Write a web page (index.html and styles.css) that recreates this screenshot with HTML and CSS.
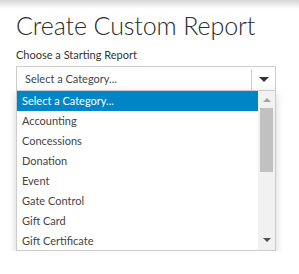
FILE: index.html
```html
<!DOCTYPE html>
<html lang="en">
<head>
  <meta charset="UTF-8" />
  <title>Create Custom Report</title>
  <link rel="stylesheet" href="styles.css">
</head>
<body>
  <div class="top-shade"></div>
  <div class="page">
    <h1>Create Custom Report</h1>
    <label class="field-label">Choose a Starting Report</label>

    <!-- fake select, shown open -->
    <div class="picker">
      <div class="picker-box">
        <span class="picker-value">Select a Category...</span>
        <span class="picker-btn"><span class="tri-down"></span></span>
      </div>
      <div class="picker-menu">
        <ul class="options">
          <li class="selected">Select a Category...</li>
          <li>Accounting</li>
          <li>Concessions</li>
          <li>Donation</li>
          <li>Event</li>
          <li>Gate Control</li>
          <li>Gift Card</li>
          <li>Gift Certificate</li>
        </ul>
        <div class="scrollbar">
          <span class="sb-arrow up"></span>
          <div class="sb-track"><div class="sb-thumb"></div></div>
          <span class="sb-arrow down"></span>
        </div>
      </div>
    </div>
  </div>
</body>
</html>
```

FILE: styles.css
```css
body {
  margin: 0;
  font-family: Lato, sans-serif;
  color: #333;
  background: #fff;
}
.top-shade {
  height: 9px;
  background: linear-gradient(#d6d6d6, #fff);
}
.page {
  padding: 0 23px 0 16px;
}
h1 {
  margin: 1px 0 0;
  font-size: 25px;
  font-weight: 300;
  letter-spacing: -0.1px;
  line-height: 30px;
  white-space: nowrap;
  color: #2a2a2a;
}
.field-label {
  display: block;
  margin-top: 8px;
  font-size: 11px;
  line-height: 14px;
  color: #333;
}
.picker {
  margin-top: 4px;
  width: 260px;
}
.picker-box {
  display: flex;
  height: 23px;
  border: 1px solid #ccc;
  border-bottom: none;
  font-size: 11px;
}
.picker-value {
  flex: 1;
  padding-left: 8px;
  line-height: 24px;
  color: #444;
}
.picker-btn {
  width: 23px;
  margin: 2px 0 0;
  border-left: 1px solid #ccc;
  display: flex;
  align-items: center;
  justify-content: center;
}
.tri-down {
  border-left: 5px solid transparent;
  border-right: 5px solid transparent;
  border-top: 5px solid #333;
}
.picker-menu {
  display: flex;
  height: 159px;
  border: 1px solid #ccc;
  box-shadow: 0 3px 8px rgba(0, 0, 0, 0.18);
  overflow: hidden;
}
.options {
  flex: 1;
  margin: 0;
  padding: 0;
  list-style: none;
  font-size: 11px;
  color: #444;
}
.options li {
  height: 20px;
  line-height: 20px;
  padding-left: 5px;
}
.options li.selected {
  background: #0086c6;
  color: #fff;
}
.scrollbar {
  width: 17px;
  background: #f1f1f1;
  display: flex;
  flex-direction: column;
  align-items: center;
}
.sb-track {
  flex: 1;
  width: 100%;
  padding: 0 2px;
  box-sizing: border-box;
}
.sb-thumb {
  height: 64px;
  background: #c1c1c1;
}
.sb-arrow {
  width: 0;
  height: 0;
  border-left: 4px solid transparent;
  border-right: 4px solid transparent;
  margin: 7px 0 6px;
}
.sb-arrow.up {
  border-bottom: 4px solid #a3a3a3;
}
.sb-arrow.down {
  border-top: 4px solid #505050;
  margin-bottom: 8px;
}
```
